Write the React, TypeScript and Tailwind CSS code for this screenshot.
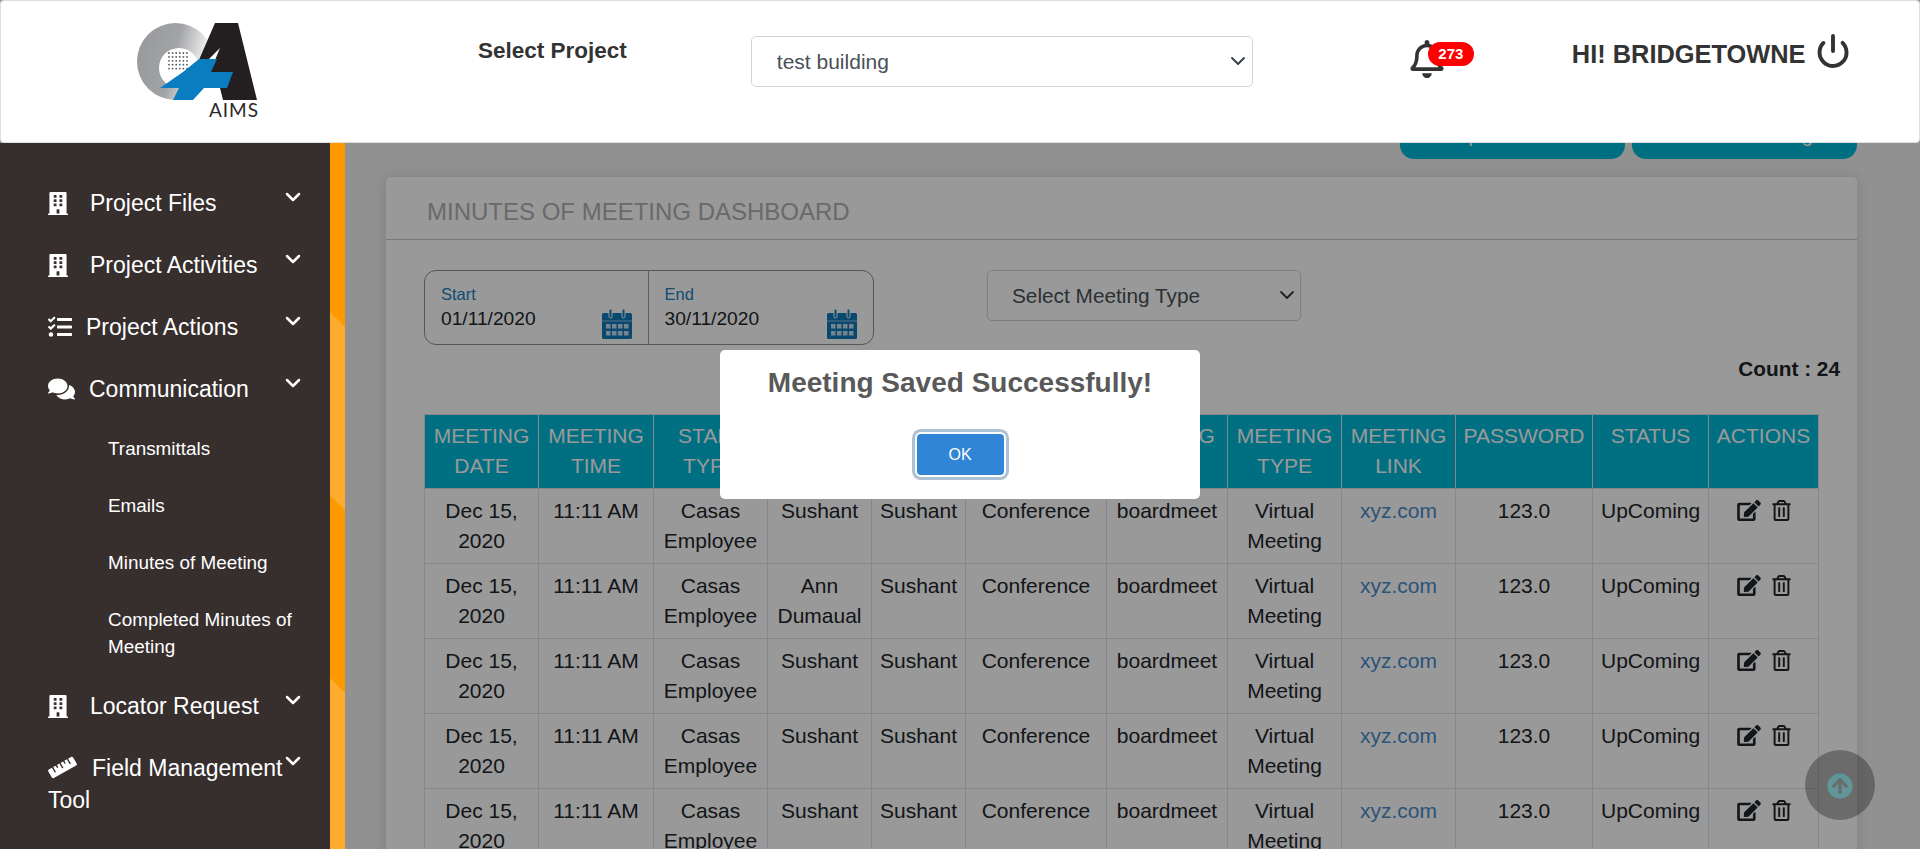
import { ChevronDown, Power } from "lucide-react";
import {
  FaArrowCircleUp,
  FaBuilding,
  FaComments,
  FaEdit,
  FaRegBell,
  FaRegTrashAlt,
  FaRuler,
  FaTasks,
} from "react-icons/fa";

const rows = [
  { staff: "Sushant" },
  { staff: "Ann Dumaual" },
  { staff: "Sushant" },
  { staff: "Sushant" },
  { staff: "Sushant" },
];

const headers = [
  { label: "MEETING DATE", w: "w-[114px]" },
  { label: "MEETING TIME", w: "w-[115px]" },
  { label: "STAFF TYPE", w: "w-[114px]" },
  { label: "HOST", w: "w-[104px]" },
  { label: "STAFF", w: "w-[94px]" },
  { label: "TITLE", w: "w-[141px]" },
  { label: "MEETING NAME", w: "w-[121px]" },
  { label: "MEETING TYPE", w: "w-[114px]" },
  { label: "MEETING LINK", w: "w-[114px]" },
  { label: "PASSWORD", w: "w-[137px]" },
  { label: "STATUS", w: "w-[116px]" },
  { label: "ACTIONS", w: "w-[110px]" },
];

const td = "border border-[#dee2e6] px-[8px] pt-[7px] pb-[7px] align-top";

const Logo = () => (
  <svg viewBox="0 0 160 115" className="w-[160px] h-[115px] shrink-0">
    <defs>
      <linearGradient id="ring" x1="0" y1="0" x2="1" y2="0.25">
        <stop offset="0" stopColor="#97989b" />
        <stop offset="0.55" stopColor="#a2a3a5" />
        <stop offset="1" stopColor="#ffffff" />
      </linearGradient>
    </defs>
    <path
      fillRule="evenodd"
      fill="url(#ring)"
      d="M55.5 13a38.5 38.5 0 1 0 0 77a38.5 38.5 0 1 0 0-77zM59 38a20 20 0 1 1 0 40a20 20 0 1 1 0-40z"
    />
    {[0, 1, 2, 3, 4, 5].map((c) =>
      [0, 1, 2, 3, 4].map((r) => (
        <circle
          key={`${c}-${r}`}
          cx={49 + c * 3.6}
          cy={43 + r * 3.9}
          r="0.9"
          fill={c === 3 && r === 3 ? "#0f7fc0" : "#55565a"}
        />
      ))
    )}
    <polygon points="95,13 118,13 137,90 103,90 100,78 108,62 90,62 100,38 72,66" fill="#231f20" />
    <polygon points="79,49 97,49 91,62 113,62 107,78 84,78 73,90 53,90 59,78 40,78 63,62" fill="#0a7dc1" />
    <text x="89" y="107" fontSize="19" fill="#2b2728" fontFamily="Lato, sans-serif" textLength="49">
      AIMS
    </text>
  </svg>
);

const CalendarIcon = () => (
  <svg viewBox="0 0 30 30" className="w-[30px] h-[30px] shrink-0">
    <rect x="0" y="4" width="30" height="26" rx="1.5" fill="#117bba" />
    <rect x="0" y="11.5" width="30" height="1" fill="#ffffff" opacity="0.5" />
    <rect x="7" y="0" width="3" height="9" rx="1.5" fill="#117bba" stroke="#ffffff" strokeWidth="1" />
    <rect x="20" y="0" width="3" height="9" rx="1.5" fill="#117bba" stroke="#ffffff" strokeWidth="1" />
    {[4, 10, 16, 22].map((x) =>
      [15, 22].map((y) => <rect key={`${x}-${y}`} x={x} y={y} width="4.5" height="4.5" fill="#ffffff" opacity="0.75" />)
    )}
  </svg>
);

const NavItem = ({
  icon,
  label,
  gap,
}: {
  icon: React.ReactNode;
  label: string;
  gap: string;
}) => (
  <div className="h-[62px] pl-[48px] pr-[25px] flex items-center">
    <div className="w-[48px] flex items-center shrink-0 -mr-[48px]">{icon}</div>
    <span className={`flex-1 whitespace-nowrap ${gap}`}>{label}</span>
    <ChevronDown size={24} strokeWidth={2.5} className="shrink-0 self-start mt-[13px]" />
  </div>
);

const Sidebar = () => (
  <aside className="w-[330px] shrink-0 bg-[#372e2e] text-white text-[23px] pt-[29px] relative z-20">
    <NavItem icon={<FaBuilding className="w-[20px] h-[23px]" />} label="Project Files" gap="ml-[42px]" />
    <NavItem icon={<FaBuilding className="w-[20px] h-[23px]" />} label="Project Activities" gap="ml-[42px]" />
    <NavItem icon={<FaTasks className="w-[24px] h-[24px]" />} label="Project Actions" gap="ml-[38px]" />
    <NavItem icon={<FaComments className="w-[27px] h-[24px]" />} label="Communication" gap="ml-[41px]" />
    <div className="text-[18.9px] leading-[27px] pl-[108px] pr-[32px]">
      <div className="py-[15px]">Transmittals</div>
      <div className="py-[15px]">Emails</div>
      <div className="py-[15px]">Minutes of Meeting</div>
      <div className="py-[15px]">Completed Minutes of Meeting</div>
    </div>
    <NavItem icon={<FaBuilding className="w-[20px] h-[23px]" />} label="Locator Request" gap="ml-[42px]" />
    <div className="pl-[48px] pr-[25px] pt-[15px] flex leading-[32px]">
      <div className="w-[233px] shrink-0">
        <div className="whitespace-nowrap">
          <FaRuler className="w-[29px] h-[23px] inline-block mr-[15px] align-[-3px]" />
          Field Management
        </div>
        <div>Tool</div>
      </div>
      <ChevronDown size={24} strokeWidth={2.5} className="shrink-0 -mt-[3px]" />
    </div>
  </aside>
);

const Stripe = () => (
  <div className="w-[15px] shrink-0 bg-[#ff9900] relative z-20 overflow-hidden">
    <div className="absolute left-0 top-[169px] w-[15px] h-[198px] bg-[#ffab2e] [clip-path:polygon(0_0,100%_15px,100%_100%,0_calc(100%-15px))]" />
    <div className="absolute left-0 top-[535px] w-[15px] h-[200px] bg-[#ffab2e] [clip-path:polygon(0_0,100%_15px,100%_100%,0_100%)]" />
  </div>
);

const DateCell = ({ label, value, w, border }: { label: string; value: string; w: string; border?: boolean }) => (
  <div className={`${w} h-full pl-[16px] pr-[16px] flex items-end justify-between pb-[5px] ${border ? "border-r border-[#9b9b9b]" : ""}`}>
    <div className="mb-[7px]">
      <div className="text-[16.5px] leading-[24px] text-[#1a80c3]">{label}</div>
      <div className="text-[19.2px] leading-[26px] text-[#212529]">{value}</div>
    </div>
    <CalendarIcon />
  </div>
);

const MeetingTable = () => (
  <table className="table-fixed border-collapse w-[1394px] text-[21px] leading-[30px] text-center text-[#212529]">
    <thead>
      <tr className="bg-[#00b9d9] text-white h-[74px]">
        {headers.map((h) => (
          <th key={h.label} className={`${h.w} font-normal border border-[#dee2e6] px-[6px] pt-[6px] pb-[7px] align-top`}>
            {h.label}
          </th>
        ))}
      </tr>
    </thead>
    <tbody>
      {rows.map((row, i) => (
        <tr key={i} className="h-[75px]">
          <td className={td}>Dec 15, 2020</td>
          <td className={td}>11:11 AM</td>
          <td className={td}>Casas Employee</td>
          <td className={td}>{row.staff}</td>
          <td className={td}>Sushant</td>
          <td className={td}>Conference</td>
          <td className={td}>boardmeet</td>
          <td className={td}>Virtual Meeting</td>
          <td className={`${td} text-[#4a8acb]`}>xyz.com</td>
          <td className={td}>123.0</td>
          <td className={td}>UpComing</td>
          <td className={td}>
            <div className="flex justify-center items-center gap-[11px] pt-[4px] text-[#212529]">
              <FaEdit className="w-[24px] h-[21px]" />
              <FaRegTrashAlt className="w-[19px] h-[21px]" />
            </div>
          </td>
        </tr>
      ))}
    </tbody>
  </table>
);

export default function App() {
  return (
    <div className="h-screen overflow-hidden flex flex-col font-['Liberation_Sans',Arial,sans-serif] relative">
      <header className="h-[143px] shrink-0 bg-white border border-[#dedede] rounded-[4px] relative z-20 flex items-start">
        <div className="ml-[119px] mt-[9px]">
          <Logo />
        </div>
        <div className="ml-[198px] mt-[37px] text-[22.5px] leading-[26px] font-bold text-[#333333] whitespace-nowrap">Select Project</div>
        <div className="ml-[124px] mt-[35px] w-[502px] h-[51px] relative shrink-0">
          <select
            defaultValue="test building"
            className="w-full h-full appearance-none bg-white border border-[#ced4da] rounded-[5px] pl-[25px] pr-[12px] text-[21px] text-[#495057]"
          >
            <option>test building</option>
          </select>
          <ChevronDown size={24} strokeWidth={1.8} className="absolute right-[3px] top-[13px] text-[#343a40] pointer-events-none" />
        </div>
        <div className="ml-[157px] mt-[39px] relative w-[64px] h-[40px] shrink-0">
          <FaRegBell className="w-[34px] h-[38px] text-[#333333]" />
          <span className="absolute left-[18px] top-[2px] w-[46px] h-[24px] rounded-[12px] bg-[#ff0000] text-white text-[15px] leading-[24px] font-bold text-center">
            273
          </span>
        </div>
        <div className="ml-[98px] mt-[39px] text-[25.4px] leading-[29px] font-bold text-[#333333] whitespace-nowrap">HI! BRIDGETOWNE</div>
        <Power size={36} strokeWidth={2.6} className="ml-[9px] mt-[32px] text-[#333333] shrink-0" />
      </header>

      <div className="flex flex-1 min-h-0">
        <Sidebar />
        <Stripe />
        <main className="flex-1 min-w-0 bg-[#f0f2f1] overflow-hidden pl-[41px]">
          <div className="h-[16px] w-[1471px] flex items-end justify-end gap-[7px] overflow-hidden">
            <button className="w-[225px] h-[45px] shrink-0 pb-[4px] rounded-[14px] bg-[#00b9d9] text-white text-[20px]">Import Minutes</button>
            <button className="w-[225px] h-[45px] shrink-0 pb-[4px] rounded-[14px] bg-[#00b9d9] text-white text-[20px]">Create Meeting</button>
          </div>
          <section className="mt-[18px] w-[1471px] bg-white rounded-[5px] shadow-[0_0_14px_rgba(0,0,0,0.12)]">
            <div className="h-[63px] pl-[41px] border-b border-[#c8c8c8] flex items-center text-[24px] text-[#b0b0b0] pt-[8px]">
              MINUTES OF MEETING DASHBOARD
            </div>
            <div className="pt-[30px] pl-[38px] pr-[17px]">
              <div className="flex items-start">
                <div className="w-[450px] h-[75px] border border-[#8f8f8f] rounded-[12px] flex">
                  <DateCell label="Start" value="01/11/2020" w="w-[224px]" border />
                  <DateCell label="End" value="30/11/2020" w="w-[225px]" />
                </div>
                <div className="ml-[113px] w-[314px] h-[51px] relative">
                  <select
                    defaultValue="Select Meeting Type"
                    className="w-full h-full appearance-none bg-white border border-[#ced4da] rounded-[5px] pl-[24px] pr-[8px] text-[20.8px] text-[#495057]"
                  >
                    <option>Select Meeting Type</option>
                  </select>
                  <ChevronDown size={24} strokeWidth={1.8} className="absolute right-[2px] top-[13px] text-[#343a40] pointer-events-none" />
                </div>
              </div>
              <div className="mt-[12px] h-[24px] text-right text-[20.8px] leading-[24px] font-bold text-[#212529]">Count : 24</div>
              <div className="mt-[33px]">
                <MeetingTable />
              </div>
            </div>
          </section>
        </main>
      </div>

      <button className="absolute left-[1805px] top-[750px] w-[70px] h-[70px] rounded-full bg-black/30 flex items-center justify-center pt-[1px] z-0">
        <FaArrowCircleUp className="w-[26px] h-[26px] text-[#a0f8ff]" />
      </button>

      <div className="absolute inset-0 bg-black/40 z-10" />

      <div className="absolute inset-0 z-30 flex justify-center items-start pt-[350px]">
        <div className="w-[480px] h-[149px] bg-white rounded-[5px] flex flex-col items-center">
          <h2 className="mt-[17px] text-[28px] leading-[32px] font-bold text-[#595959]">Meeting Saved Successfully!</h2>
          <button className="mt-[35px] w-[87px] h-[41px] rounded-[4px] bg-[#3085d6] text-white text-[16px] shadow-[0_0_0_2px_#ffffff,0_0_0_5px_rgba(50,100,150,0.4)]">
            OK
          </button>
        </div>
      </div>
    </div>
  );
}
